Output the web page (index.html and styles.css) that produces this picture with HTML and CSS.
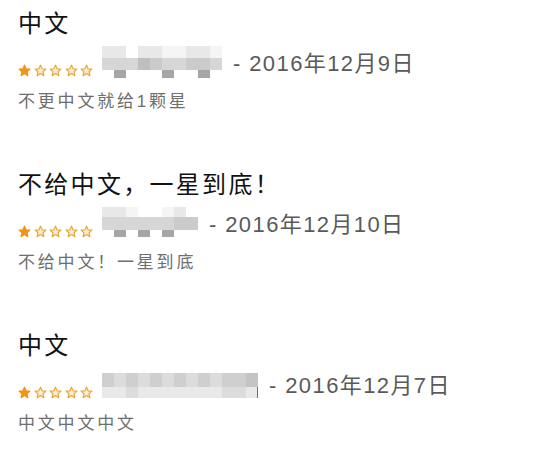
FILE: index.html
```html
<!DOCTYPE html>
<html lang="zh">
<head>
<meta charset="utf-8">
<link rel="stylesheet" href="styles.css">
<title>评论</title>
</head>
<body>
<svg width="0" height="0" class="defs">
  <defs>
    <path id="star" d="M12 2.2l2.9 6.6 7.1.7-5.4 4.8 1.6 7.1L12 17.7l-6.2 3.7 1.6-7.1L2 9.5l7.1-.7z"/>
  </defs>
</svg>
<div class="list">
  <section class="review">
    <h2 class="title">中文</h2>
    <div class="meta">
      <div class="stars">
        <svg class="star full" viewBox="0 0 24 24"><use href="#star"/></svg>
        <svg class="star" viewBox="0 0 24 24"><use href="#star"/></svg>
        <svg class="star" viewBox="0 0 24 24"><use href="#star"/></svg>
        <svg class="star" viewBox="0 0 24 24"><use href="#star"/></svg>
        <svg class="star" viewBox="0 0 24 24"><use href="#star"/></svg>
      </div>
      <div class="mosaic m1">
        <i class="c1"></i><i class="c1"></i><i class="c0"></i><i class="c1"></i><i class="c1"></i><i class="cf"></i><i class="cf"></i><i class="c1"></i><i class="c1"></i><i class="cf"></i>
        <i class="c2"></i><i class="c2"></i><i class="c2"></i><i class="c4"></i><i class="c3"></i><i class="c2"></i><i class="c2"></i><i class="c3"></i><i class="c3"></i><i class="c2"></i>
        <i class="c0"></i><i class="c5"></i><i class="c0"></i><i class="c0"></i><i class="c0"></i><i class="c5"></i><i class="c0"></i><i class="c0"></i><i class="c5"></i><i class="c0"></i>
      </div>
      <span class="date">- 2016年12月9日</span>
    </div>
    <p class="comment">不更中文就给1颗星</p>
  </section>

  <section class="review">
    <h2 class="title">不给中文，一星到底！</h2>
    <div class="meta">
      <div class="stars">
        <svg class="star full" viewBox="0 0 24 24"><use href="#star"/></svg>
        <svg class="star" viewBox="0 0 24 24"><use href="#star"/></svg>
        <svg class="star" viewBox="0 0 24 24"><use href="#star"/></svg>
        <svg class="star" viewBox="0 0 24 24"><use href="#star"/></svg>
        <svg class="star" viewBox="0 0 24 24"><use href="#star"/></svg>
      </div>
      <div class="mosaic m2">
        <i class="c1"></i><i class="c1"></i><i class="cf"></i><i class="c0"></i><i class="c0"></i><i class="cf"></i><i class="c1"></i><i class="c0"></i>
        <i class="c2"></i><i class="c2"></i><i class="c2"></i><i class="c2"></i><i class="c2"></i><i class="c2"></i><i class="c3"></i><i class="c3"></i>
        <i class="c0"></i><i class="c5"></i><i class="c0"></i><i class="c5"></i><i class="c0"></i><i class="c5"></i><i class="c0"></i><i class="c0"></i>
      </div>
      <span class="date">- 2016年12月10日</span>
    </div>
    <p class="comment">不给中文！一星到底</p>
  </section>

  <section class="review">
    <h2 class="title">中文</h2>
    <div class="meta">
      <div class="stars">
        <svg class="star full" viewBox="0 0 24 24"><use href="#star"/></svg>
        <svg class="star" viewBox="0 0 24 24"><use href="#star"/></svg>
        <svg class="star" viewBox="0 0 24 24"><use href="#star"/></svg>
        <svg class="star" viewBox="0 0 24 24"><use href="#star"/></svg>
        <svg class="star" viewBox="0 0 24 24"><use href="#star"/></svg>
      </div>
      <div class="mosaic m3">
        <i class="d1"></i><i class="d2"></i><i class="d1"></i><i class="d2"></i><i class="d1"></i><i class="d2"></i><i class="d1"></i><i class="d2"></i><i class="d1"></i><i class="d2"></i><i class="d1"></i><i class="d1"></i><i class="d0"></i>
        <i class="e1"></i><i class="e1"></i><i class="e2"></i><i class="e1"></i><i class="e1"></i><i class="e1"></i><i class="e1"></i><i class="e1"></i><i class="e1"></i><i class="e1"></i><i class="e2"></i><i class="e2"></i><i class="e1 edge"></i>
      </div>
      <span class="date">- 2016年12月7日</span>
    </div>
    <p class="comment">中文中文中文</p>
  </section>
</div>
</body>
</html>
```
FILE: styles.css
```css
html, body {
  margin: 0;
  padding: 0;
  background: #ffffff;
}

body {
  font-family: "Liberation Sans", "Noto Sans CJK SC", sans-serif;
  width: 550px;
  height: 474px;
  overflow: hidden;
}

.defs {
  position: absolute;
  width: 0;
  height: 0;
}

.list {
  display: flex;
  flex-direction: column;
  gap: 56px;
  padding: 9px 0 0 18px;
}

.review {
  display: flex;
  flex-direction: column;
}

.title {
  margin: 0;
  font-size: 24px;
  line-height: 30px;
  font-weight: 400;
  letter-spacing: 2.3px;
  color: #111111;
}

.meta {
  margin-top: 7px;
  height: 36px;
  display: flex;
  align-items: center;
}

.stars {
  align-self: flex-end;
  margin-bottom: 5px;
  display: flex;
  gap: 2.5px;
  width: 77px;
}

.star {
  width: 13px;
  height: 13px;
  display: block;
}

.star use {
  fill: #fdf3d8;
  stroke: #e8a93c;
  stroke-width: 2.3;
  stroke-linejoin: round;
}

.star.full use {
  fill: #f29416;
  stroke: #f29416;
}

.mosaic {
  margin-left: 7px;
  display: grid;
  align-self: flex-start;
}

.mosaic i {
  display: block;
}

.m1 {
  grid-template-columns: repeat(10, 12px);
  grid-template-rows: 12px 12px 8px;
}

.m2 {
  grid-template-columns: repeat(8, 12px);
  grid-template-rows: 10px 13px 7px;
}

.m3 {
  margin-top: 5px;
  grid-template-columns: repeat(13, 12px);
  grid-template-rows: 14px 11px;
}

.c0 { background: transparent; }
.cf { background: #f5f5f5; }
.c1 { background: #e8e8e8; }
.c2 { background: #d6d6d6; }
.c3 { background: #cbcbcb; }
.c4 { background: #bfbfbf; }
.c5 { background: #a6a6a6; }

.d0 { background: #c4c4c4; }
.d1 { background: #cfcfcf; }
.d2 { background: #dcdcdc; }
.e1 { background: #e9e9e9; }
.e2 { background: #dcdcdc; }
.edge { border-right: 1px solid #6f6f6f; }

.date {
  margin-left: 11px;
  font-size: 22px;
  line-height: 24px;
  letter-spacing: 1.4px;
  color: #5a5a5a;
  white-space: nowrap;
}

.comment {
  margin: 8px 0 0 0;
  font-size: 17px;
  line-height: 24px;
  letter-spacing: 2.8px;
  color: #6e6e6e;
}
```
